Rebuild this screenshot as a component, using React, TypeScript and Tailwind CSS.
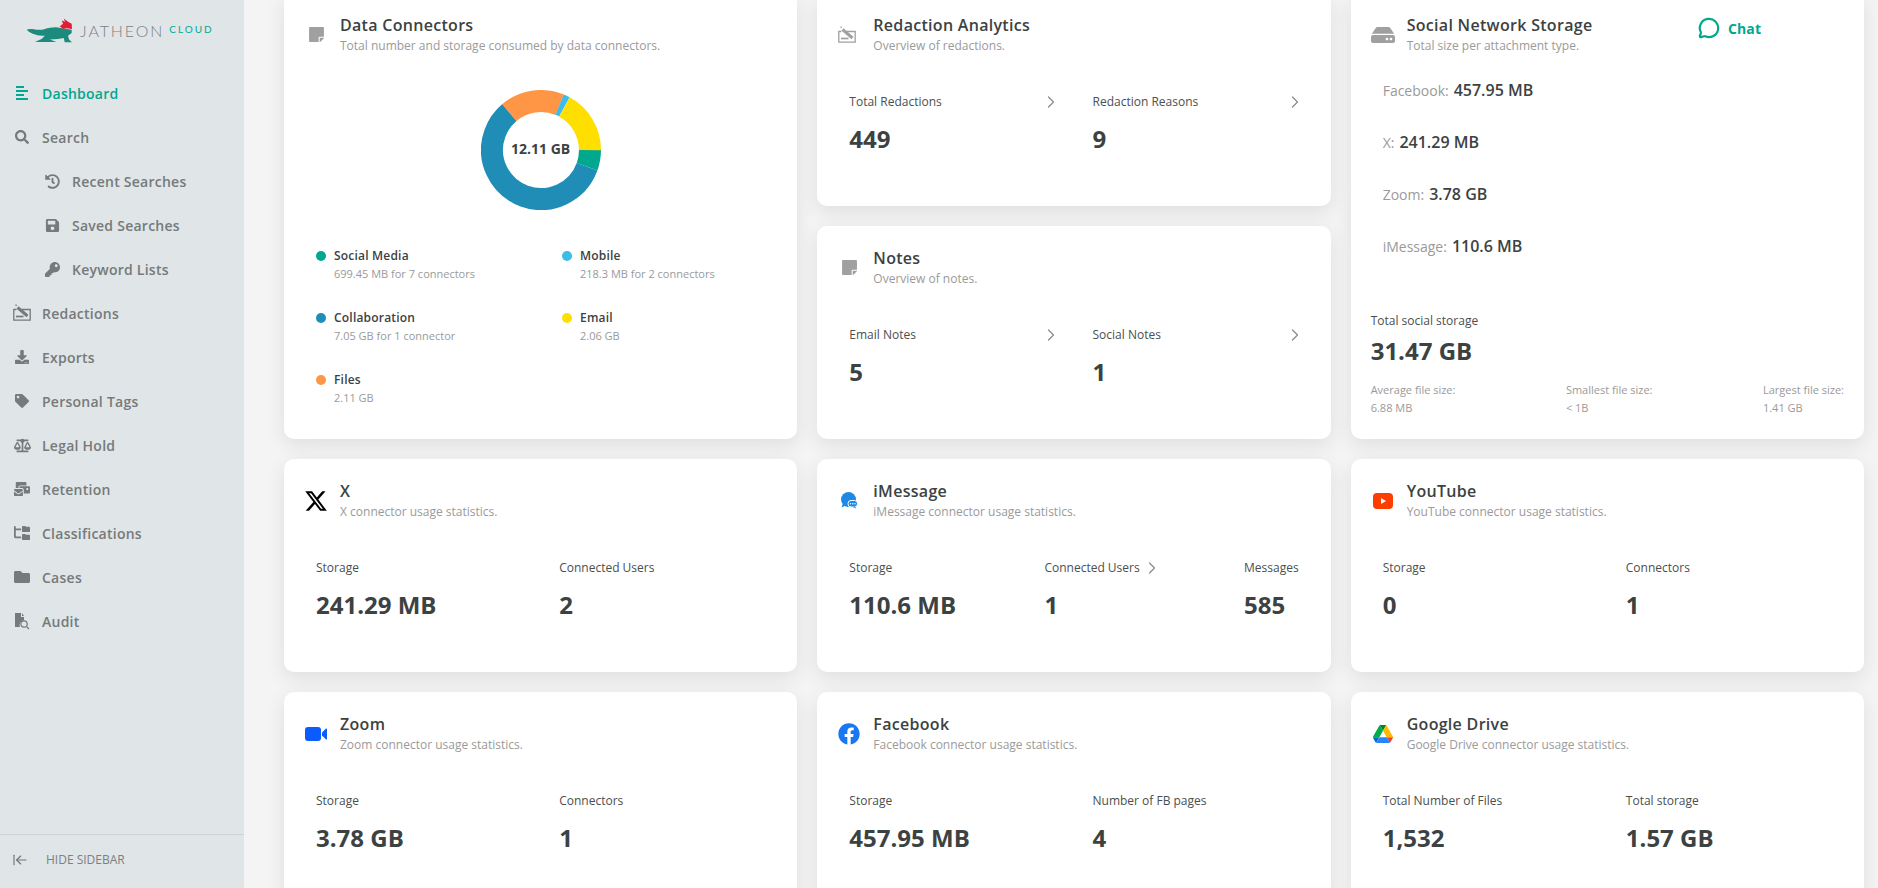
import React from "react";
import { ArrowLeftToLine, ChevronRight, MessageCircle } from "lucide-react";
import { FaSearch, FaHistory, FaSave, FaKey, FaDownload, FaTag, FaBalanceScale, FaMailBulk, FaFolder, FaStickyNote, FaHdd, FaFacebook } from "react-icons/fa";
import { FaFolderTree, FaXTwitter } from "react-icons/fa6";

const RedactIcon = ({ size = 18 }: { size?: number }) => (
  <svg width={size} height={size} viewBox="0 0 18 18" fill="none" stroke="currentColor" strokeWidth="1.3">
    <path d="M3.500 5.500H.8v10.700h16.400V5.500H8.500" />
    <path d="M3 12.500h7.500" strokeWidth="1.700" />
    <path d="M4.500 3.500 14.500 12" strokeWidth="3" />
    <path d="M2.500 .6l1.200 1.200" />
  </svg>
);

const DashIcon = () => (
  <svg width="12" height="14" viewBox="0 0 12 14" fill="#00a88f">
    <rect x="0" y="0" width="8" height="2" />
    <rect x="0" y="4" width="12" height="2" />
    <rect x="0" y="8" width="8" height="2" />
    <rect x="0" y="12" width="12" height="2" />
  </svg>
);

const AuditIcon = () => (
  <svg width="16" height="17" viewBox="0 0 16 17" fill="currentColor">
    <path d="M1 0h6v4h3v3.200A5 5 0 0 0 6 14H1z" />
    <path d="M8 0l2 3H8z" />
    <circle cx="10" cy="11" r="3.200" fill="none" stroke="currentColor" strokeWidth="1.200" />
    <path d="M12.400 13.400 15 16" stroke="currentColor" strokeWidth="1.300" />
  </svg>
);

const FoxLogo = () => (
  <svg width="47" height="25" viewBox="78 55 142 75" className="shrink-0">
    <path d="M80 90C95 84 115 95 135 88C150 83 170 80 183 85L200 88L216 90L216 100L205 108L208 120L217 128L195 128L192 115L175 118L150 120L170 127L105 127L125 118L135 108C115 108 95 105 80 90Z" fill="#1c8a7d" />
    <path d="M180 80L190 72L186 62L196 66L192 56L205 66L216 72L217 88L200 86L190 88Z" fill="#e01f35" />
  </svg>
);

const navItems: { label: string; icon: React.ReactNode; sub?: boolean; active?: boolean }[] = [
  { label: "Dashboard", icon: <DashIcon />, active: true },
  { label: "Search", icon: <FaSearch size={14} /> },
  { label: "Recent Searches", icon: <FaHistory size={15} />, sub: true },
  { label: "Saved Searches", icon: <FaSave size={15} />, sub: true },
  { label: "Keyword Lists", icon: <FaKey size={15} />, sub: true },
  { label: "Redactions", icon: <RedactIcon /> },
  { label: "Exports", icon: <FaDownload size={14} /> },
  { label: "Personal Tags", icon: <FaTag size={14} /> },
  { label: "Legal Hold", icon: <FaBalanceScale size={17} /> },
  { label: "Retention", icon: <FaMailBulk size={16} /> },
  { label: "Classifications", icon: <FaFolderTree size={16} /> },
  { label: "Cases", icon: <FaFolder size={16} /> },
  { label: "Audit", icon: <AuditIcon /> },
];

const Card = ({ children, className = "" }: { children: React.ReactNode; className?: string }) => (
  <div className={`bg-white rounded-[10px] shadow-[0_6px_20px_rgba(0,0,0,0.09)] flex flex-col min-w-0 ${className}`}>{children}</div>
);

const Header = ({ icon, title, sub }: { icon: React.ReactNode; title: string; sub: string }) => (
  <div className="flex items-center pl-2 pt-[21px]">
    <div className="w-12 flex justify-center items-center text-[#a0a0a0] shrink-0">{icon}</div>
    <div>
      <div className="text-[16px] leading-[22px] font-semibold tracking-[0.3px] text-[#3c4242]">{title}</div>
      <div className="text-[12px] leading-[18px] mt-px text-[#9a9a9a]">{sub}</div>
    </div>
  </div>
);

const Stat = ({ label, value, chevron, spread }: { label: string; value: string; chevron?: boolean; spread?: boolean }) => (
  <div>
    <div className={`flex items-center h-[18px] text-[12px] leading-[18px] text-[#4a4f4f] ${spread ? "justify-between" : "gap-[2px]"}`}>
      <span>{label}</span>
      {chevron && <ChevronRight size={20} strokeWidth={1.500} className="text-[#8c8c8c] -mr-[6px]" />}
    </div>
    <div className="text-[24px] leading-[36px] font-bold text-[#3c4242] mt-[10px]">{value}</div>
  </div>
);

const TwoStats = ({ a, b, spread }: { a: [string, string, boolean?]; b: [string, string, boolean?]; spread?: boolean }) => (
  <div className="grid grid-cols-2 gap-[37px] px-8 mt-[38px]">
    <Stat label={a[0]} value={a[1]} chevron={a[2]} spread={spread} />
    <Stat label={b[0]} value={b[1]} chevron={b[2]} spread={spread} />
  </div>
);

const segments = [
  { v: 20, c: "#00a88f" },
  { v: 209.6, c: "#1f8db5" },
  { v: 62.7, c: "#ff9646" },
  { v: 6.3, c: "#3dbce8" },
  { v: 61.4, c: "#ffdf00" },
];

const Donut = () => {
  const r = 49;
  const circ = 2 * Math.PI * r;
  let start = 0;
  return (
    <div className="relative w-[120px] h-[120px] mx-auto mt-[35px]">
      <svg width="120" height="120" viewBox="0 0 120 120">
        {segments.map((s) => {
          const el = (
            <circle
              key={s.c}
              cx="60"
              cy="60"
              r={r}
              fill="none"
              stroke={s.c}
              strokeWidth="22"
              strokeDasharray={`${(s.v / 360) * circ} ${circ}`}
              transform={`rotate(${start} 60 60)`}
            />
          );
          start += s.v;
          return el;
        })}
      </svg>
      <div className="absolute inset-0 flex items-center justify-center pb-[3px] text-[14px] font-bold text-[#3c4242]">12.11 GB</div>
    </div>
  );
};

const legend = [
  { c: "#00a88f", t: "Social Media", s: "699.45 MB for 7 connectors" },
  { c: "#3dbce8", t: "Mobile", s: "218.3 MB for 2 connectors" },
  { c: "#1f8db5", t: "Collaboration", s: "7.05 GB for 1 connector" },
  { c: "#ffdf00", t: "Email", s: "2.06 GB" },
  { c: "#ff9646", t: "Files", s: "2.11 GB" },
];

const ZoomIcon = () => (
  <svg width="22" height="14" viewBox="0 0 22 14" fill="#0b5cff">
    <rect x="0" y="0" width="16" height="14" rx="3" />
    <path d="M17 5.500 21 1.600c.4-.3 1-.2 1 .5v9.800c0 .7-.6.8-1 .5l-4-3.900z" />
  </svg>
);

const YouTubeIcon = () => (
  <svg width="20" height="16" viewBox="0 0 20 16">
    <rect width="20" height="16" rx="4" fill="#ff3d00" />
    <path d="M8 5l5 3-5 3z" fill="#fff" />
  </svg>
);

const DriveIcon = () => (
  <svg width="20" height="18" viewBox="0 0 87.3 78">
    <path d="m6.6 66.85 3.85 6.65c.8 1.4 1.95 2.5 3.3 3.3l13.75-23.8h-27.5c0 1.55.4 3.1 1.2 4.5z" fill="#0066da" />
    <path d="m43.65 25-13.75-23.8c-1.35.8-2.5 1.9-3.3 3.3l-25.4 44a9.06 9.06 0 0 0 -1.2 4.5h27.5z" fill="#00ac47" />
    <path d="m73.55 76.8c1.35-.8 2.5-1.9 3.3-3.3l1.6-2.75 7.65-13.25c.8-1.4 1.2-2.95 1.2-4.5h-27.502l5.852 11.5z" fill="#ea4335" />
    <path d="m43.65 25 13.75-23.8c-1.35-.8-2.9-1.2-4.5-1.2h-18.5c-1.6 0-3.15.45-4.5 1.2z" fill="#00832d" />
    <path d="m59.8 53h-32.3l-13.75 23.8c1.35.8 2.9 1.2 4.5 1.2h50.8c1.6 0 3.15-.45 4.5-1.2z" fill="#2684fc" />
    <path d="m73.4 26.5-12.7-22c-.8-1.4-1.95-2.5-3.3-3.3l-13.75 23.8 16.15 28h27.45c0-1.55-.4-3.1-1.2-4.5z" fill="#ffba00" />
  </svg>
);

const IMessageIcon = () => (
  <svg width="18" height="17" viewBox="0 0 18 17">
    <circle cx="8.500" cy="7.500" r="7.500" fill="#1e88e5" />
    <path d="M3 11 1.500 15.500l5-2.500z" fill="#1e88e5" />
    <rect x="8" y="8.500" width="9.500" height="6.500" rx="3" fill="#1e88e5" stroke="#fff" strokeWidth="1" />
    <path d="M15 14.500l1.500 2-4-1.500z" fill="#1e88e5" />
    <circle cx="10.500" cy="11.700" r=".7" fill="#fff" />
    <circle cx="12.800" cy="11.700" r=".7" fill="#fff" />
    <circle cx="15" cy="11.700" r=".7" fill="#fff" />
  </svg>
);

export default function App() {
  return (
    <div className="flex w-[1878px] h-[888px] overflow-hidden bg-[#f4f4f4] relative" style={{ fontFamily: '"Open Sans", sans-serif' }}>
      <aside className="w-[244px] shrink-0 h-full bg-[#e0e5e8] flex flex-col">
        <div className="flex items-start pl-[26px] pt-[18px] h-[71px] shrink-0">
          <FoxLogo />
          <span className="text-[16px] leading-[26px] font-light tracking-[1.9px] text-[#7c8282] ml-[7px]" style={{ fontFamily: "Lato, sans-serif" }}>JATHEON</span>
          <span className="text-[10px] leading-[22px] tracking-[2px] text-[#00a88f] ml-[5px]" style={{ fontFamily: "Lato, sans-serif" }}>CLOUD</span>
        </div>
        <nav className="flex flex-col">
          {navItems.map((n) => (
            <div key={n.label} className={`flex items-center h-11 text-[14px] font-semibold tracking-[0.25px] ${n.active ? "text-[#00a88f]" : "text-[#757a7a]"} ${n.sub ? "pl-[42px]" : "pl-[12px]"}`}>
              <span className="w-[20px] flex justify-center items-center shrink-0 mr-[10px]">{n.icon}</span>
              <span>{n.label}</span>
            </div>
          ))}
        </nav>
        <div className="mt-auto h-[54px] pb-1 border-t border-[#cdd2d6] flex items-center pl-[12px] text-[12px] text-[#7c8080]">
          <ArrowLeftToLine size={16} strokeWidth={1.700} className="mr-[18px] text-[#6f7474]" />
          HIDE SIDEBAR
        </div>
      </aside>

      <main className="flex-1 min-w-0 pl-10 pr-[14px] -mt-[7px]">
        <div className="grid grid-cols-3 gap-5 auto-rows-[213px]">
          <Card className="row-span-2">
            <Header icon={<FaStickyNote size={17} />} title="Data Connectors" sub="Total number and storage consumed by data connectors." />
            <Donut />
            <div className="grid grid-cols-[246px_1fr] gap-y-[26px] pl-8 mt-[37px]">
              {legend.map((l) => (
                <div key={l.t} className="flex">
                  <span className="w-[10px] h-[10px] rounded-full mt-1 mr-[8px] shrink-0" style={{ backgroundColor: l.c }} />
                  <div>
                    <div className="text-[12px] leading-[18px] font-semibold tracking-[0.2px] text-[#3c4242]">{l.t}</div>
                    <div className="text-[11px] leading-[18px] text-[#9a9a9a]">{l.s}</div>
                  </div>
                </div>
              ))}
            </div>
          </Card>

          <Card>
            <Header icon={<span className="block -ml-1"><RedactIcon /></span>} title="Redaction Analytics" sub="Overview of redactions." />
            <TwoStats a={["Total Redactions", "449", true]} b={["Redaction Reasons", "9", true]} spread />
          </Card>

          <Card className="row-span-2">
            <Header icon={<FaHdd size={24} />} title="Social Network Storage" sub="Total size per attachment type." />
            <div className="px-8 mt-[9px]">
              {[
                ["Facebook:", "457.95 MB"],
                ["X:", "241.29 MB"],
                ["Zoom:", "3.78 GB"],
                ["iMessage:", "110.6 MB"],
              ].map(([k, v]) => (
                <div key={k} className="h-[52px] flex items-center gap-[5px] text-[14px]">
                  <span className="text-[#9a9a9a]">{k}</span>
                  <span className="text-[16px] font-semibold text-[#3c4242]">{v}</span>
                </div>
              ))}
            </div>
            <div className="mt-auto px-5 pb-[22px]">
              <div className="text-[12px] leading-[18px] text-[#4a4f4f]">Total social storage</div>
              <div className="text-[24px] leading-[36px] font-bold text-[#3c4242] mt-[3px]">31.47 GB</div>
              <div className="flex justify-between mt-3 text-[11px] leading-[18px] text-[#9a9a9a]">
                <div><div>Average file size:</div><div>6.88 MB</div></div>
                <div><div>Smallest file size:</div><div>&lt; 1B</div></div>
                <div><div>Largest file size:</div><div>1.41 GB</div></div>
              </div>
            </div>
          </Card>

          <Card>
            <Header icon={<FaStickyNote size={17} />} title="Notes" sub="Overview of notes." />
            <TwoStats a={["Email Notes", "5", true]} b={["Social Notes", "1", true]} spread />
          </Card>

          <Card>
            <Header icon={<FaXTwitter size={24} className="text-black" />} title="X" sub="X connector usage statistics." />
            <TwoStats a={["Storage", "241.29 MB"]} b={["Connected Users", "2"]} />
          </Card>

          <Card>
            <Header icon={<IMessageIcon />} title="iMessage" sub="iMessage connector usage statistics." />
            <div className="flex justify-between px-8 mt-[38px]">
              <Stat label="Storage" value="110.6 MB" />
              <Stat label="Connected Users" value="1" chevron />
              <Stat label="Messages" value="585" />
            </div>
          </Card>

          <Card>
            <Header icon={<YouTubeIcon />} title="YouTube" sub="YouTube connector usage statistics." />
            <TwoStats a={["Storage", "0"]} b={["Connectors", "1"]} />
          </Card>

          <Card>
            <Header icon={<ZoomIcon />} title="Zoom" sub="Zoom connector usage statistics." />
            <TwoStats a={["Storage", "3.78 GB"]} b={["Connectors", "1"]} />
          </Card>

          <Card>
            <Header icon={<FaFacebook size={22} className="text-[#1877f2]" />} title="Facebook" sub="Facebook connector usage statistics." />
            <TwoStats a={["Storage", "457.95 MB"]} b={["Number of FB pages", "4"]} />
          </Card>

          <Card>
            <Header icon={<DriveIcon />} title="Google Drive" sub="Google Drive connector usage statistics." />
            <TwoStats a={["Total Number of Files", "1,532"]} b={["Total storage", "1.57 GB"]} />
          </Card>
        </div>
      </main>

      <div className="absolute left-[1698px] top-[17px] flex items-center gap-2 text-[#00a88f] text-[14px] font-bold tracking-[0.1px]">
        <MessageCircle size={22} strokeWidth={2.400} />
        Chat
      </div>
    </div>
  );
}
